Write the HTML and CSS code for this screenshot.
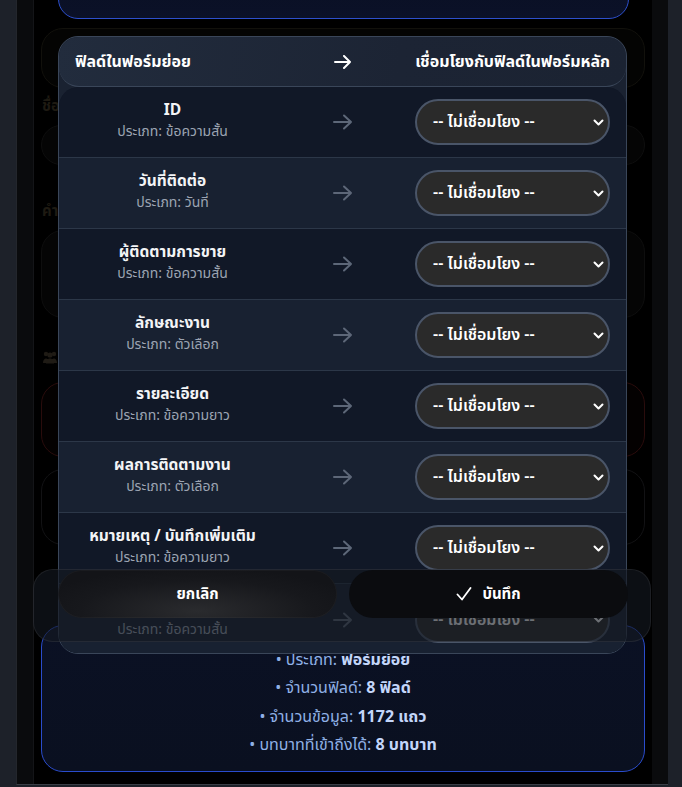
FILE: index.html
```html
<!DOCTYPE html>
<html lang="th">
<head>
<meta charset="utf-8">
<title>Field mapping</title>
<link rel="stylesheet" href="styles.css">
</head>
<body>
<div class="app">
  <div class="panel">
    <div class="content">
      <div class="top-card"></div>
      <div class="faint-card"></div>
      <div class="faint-label">ชื่อฟอร์มย่อย</div>
      <div class="faint-input"></div>
      <div class="faint-label second">คำอธิบาย</div>
      <div class="faint-textarea"></div>
      <div class="faint-label icon-label">
        <svg width="16" height="13" viewBox="0 0 16 13"><circle cx="4" cy="3" r="2.2" fill="currentColor"/><circle cx="12" cy="3" r="2.2" fill="currentColor"/><circle cx="8" cy="4" r="2.6" fill="currentColor"/><path d="M1 12c0-3 1.5-4.5 3-4.5S7 9 7 12zM9 12c0-3 1.5-4.5 3-4.5s3 1.5 3 4.5zM4 12.5c0-3.5 2-5 4-5s4 1.5 4 5z" fill="currentColor"/></svg>
        สิทธิ์การเข้าถึง
      </div>
      <div class="faint-danger"></div>
      <div class="faint-box"></div>
      <div class="info-card">
        <p class="info-line">• ประเภท: <b>ฟอร์มย่อย</b></p>
        <p class="info-line">• จำนวนฟิลด์: <b>8 ฟิลด์</b></p>
        <p class="info-line">• จำนวนข้อมูล: <b>1172 แถว</b></p>
        <p class="info-line">• บทบาทที่เข้าถึงได้: <b>8 บทบาท</b></p>
      </div>
    </div>
  </div>
</div>

<div class="mapping">
  <div class="map-head">
    <span class="head-left">ฟิลด์ในฟอร์มย่อย</span>
    <svg class="head-arrow" width="18" height="14" viewBox="0 0 18 14"><path d="M1 7h15M10 1l6 6-6 6" fill="none" stroke="currentColor" stroke-width="2" stroke-linecap="round" stroke-linejoin="round"/></svg>
    <span class="head-right">เชื่อมโยงกับฟิลด์ในฟอร์มหลัก</span>
  </div>
  <div class="map-body">
    <div class="map-row">
      <div class="field"><div class="f-name">ID</div><div class="f-type">ประเภท: ข้อความสั้น</div></div>
      <svg class="arrow" width="20" height="16" viewBox="0 0 20 16"><path d="M1 8h17M11 1.5l7 6.5-7 6.5" fill="none" stroke="currentColor" stroke-width="2" stroke-linecap="round" stroke-linejoin="round"/></svg>
      <div class="sel"><span>-- ไม่เชื่อมโยง --</span><svg width="11" height="7" viewBox="0 0 11 7"><path d="M1.5 1.5l4 4 4-4" fill="none" stroke="currentColor" stroke-width="2" stroke-linecap="round" stroke-linejoin="round"/></svg></div>
    </div>
    <div class="map-row alt">
      <div class="field"><div class="f-name">วันที่ติดต่อ</div><div class="f-type">ประเภท: วันที่</div></div>
      <svg class="arrow" width="20" height="16" viewBox="0 0 20 16"><path d="M1 8h17M11 1.5l7 6.5-7 6.5" fill="none" stroke="currentColor" stroke-width="2" stroke-linecap="round" stroke-linejoin="round"/></svg>
      <div class="sel"><span>-- ไม่เชื่อมโยง --</span><svg width="11" height="7" viewBox="0 0 11 7"><path d="M1.5 1.5l4 4 4-4" fill="none" stroke="currentColor" stroke-width="2" stroke-linecap="round" stroke-linejoin="round"/></svg></div>
    </div>
    <div class="map-row">
      <div class="field"><div class="f-name">ผู้ติดตามการขาย</div><div class="f-type">ประเภท: ข้อความสั้น</div></div>
      <svg class="arrow" width="20" height="16" viewBox="0 0 20 16"><path d="M1 8h17M11 1.5l7 6.5-7 6.5" fill="none" stroke="currentColor" stroke-width="2" stroke-linecap="round" stroke-linejoin="round"/></svg>
      <div class="sel"><span>-- ไม่เชื่อมโยง --</span><svg width="11" height="7" viewBox="0 0 11 7"><path d="M1.5 1.5l4 4 4-4" fill="none" stroke="currentColor" stroke-width="2" stroke-linecap="round" stroke-linejoin="round"/></svg></div>
    </div>
    <div class="map-row alt">
      <div class="field"><div class="f-name">ลักษณะงาน</div><div class="f-type">ประเภท: ตัวเลือก</div></div>
      <svg class="arrow" width="20" height="16" viewBox="0 0 20 16"><path d="M1 8h17M11 1.5l7 6.5-7 6.5" fill="none" stroke="currentColor" stroke-width="2" stroke-linecap="round" stroke-linejoin="round"/></svg>
      <div class="sel"><span>-- ไม่เชื่อมโยง --</span><svg width="11" height="7" viewBox="0 0 11 7"><path d="M1.5 1.5l4 4 4-4" fill="none" stroke="currentColor" stroke-width="2" stroke-linecap="round" stroke-linejoin="round"/></svg></div>
    </div>
    <div class="map-row">
      <div class="field"><div class="f-name">รายละเอียด</div><div class="f-type">ประเภท: ข้อความยาว</div></div>
      <svg class="arrow" width="20" height="16" viewBox="0 0 20 16"><path d="M1 8h17M11 1.5l7 6.5-7 6.5" fill="none" stroke="currentColor" stroke-width="2" stroke-linecap="round" stroke-linejoin="round"/></svg>
      <div class="sel"><span>-- ไม่เชื่อมโยง --</span><svg width="11" height="7" viewBox="0 0 11 7"><path d="M1.5 1.5l4 4 4-4" fill="none" stroke="currentColor" stroke-width="2" stroke-linecap="round" stroke-linejoin="round"/></svg></div>
    </div>
    <div class="map-row alt">
      <div class="field"><div class="f-name">ผลการติดตามงาน</div><div class="f-type">ประเภท: ตัวเลือก</div></div>
      <svg class="arrow" width="20" height="16" viewBox="0 0 20 16"><path d="M1 8h17M11 1.5l7 6.5-7 6.5" fill="none" stroke="currentColor" stroke-width="2" stroke-linecap="round" stroke-linejoin="round"/></svg>
      <div class="sel"><span>-- ไม่เชื่อมโยง --</span><svg width="11" height="7" viewBox="0 0 11 7"><path d="M1.5 1.5l4 4 4-4" fill="none" stroke="currentColor" stroke-width="2" stroke-linecap="round" stroke-linejoin="round"/></svg></div>
    </div>
    <div class="map-row">
      <div class="field"><div class="f-name">หมายเหตุ / บันทึกเพิ่มเติม</div><div class="f-type">ประเภท: ข้อความยาว</div></div>
      <svg class="arrow" width="20" height="16" viewBox="0 0 20 16"><path d="M1 8h17M11 1.5l7 6.5-7 6.5" fill="none" stroke="currentColor" stroke-width="2" stroke-linecap="round" stroke-linejoin="round"/></svg>
      <div class="sel"><span>-- ไม่เชื่อมโยง --</span><svg width="11" height="7" viewBox="0 0 11 7"><path d="M1.5 1.5l4 4 4-4" fill="none" stroke="currentColor" stroke-width="2" stroke-linecap="round" stroke-linejoin="round"/></svg></div>
    </div>
    <div class="map-row alt last">
      <div class="field"><div class="f-name">เบอร์โทรศัพท์</div><div class="f-type">ประเภท: ข้อความสั้น</div></div>
      <svg class="arrow" width="20" height="16" viewBox="0 0 20 16"><path d="M1 8h17M11 1.5l7 6.5-7 6.5" fill="none" stroke="currentColor" stroke-width="2" stroke-linecap="round" stroke-linejoin="round"/></svg>
      <div class="sel"><span>-- ไม่เชื่อมโยง --</span><svg width="11" height="7" viewBox="0 0 11 7"><path d="M1.5 1.5l4 4 4-4" fill="none" stroke="currentColor" stroke-width="2" stroke-linecap="round" stroke-linejoin="round"/></svg></div>
    </div>
  </div>
</div>

<div class="actions">
  <button class="btn btn-cancel" type="button">ยกเลิก</button>
  <button class="btn btn-save" type="button"><svg width="16" height="14" viewBox="0 0 16 14"><path d="M1.5 7.5l4.5 5L14.5 1" fill="none" stroke="currentColor" stroke-width="1.8" stroke-linecap="round" stroke-linejoin="round"/></svg>บันทึก</button>
</div>
</body>
</html>
```

FILE: styles.css
```css
* { box-sizing: border-box; }

html, body {
  margin: 0;
  height: 787px;
  overflow: hidden;
}

body {
  background: #1d2129;
  font-family: "Noto Sans Thai", "Noto Sans", "DejaVu Sans", sans-serif;
  color: #fff;
  position: relative;
}

.app {
  margin: 0 14px 0 16px;
  height: 785px;
  background: #0a0b0d;
  border-left: 1px solid #23262c;
  border-bottom: 1px solid #3a3e46;
}

.panel {
  margin: 0 16px 0 16px;
  height: 100%;
  background: #000;
  border-left: 1px solid #141518;
}

.content {
  padding: 0 7px 0 7px;
  display: flex;
  flex-direction: column;
}

.top-card {
  margin: -21px 16px 0 17px;
  height: 40px;
  border: 1px solid #2d4fcc;
  border-radius: 20px;
  background: linear-gradient(180deg, #0a1024, #0b1128);
}

.faint-card {
  margin-top: 9px;
  height: 60px;
  border: 1px solid #12110c;
  border-radius: 22px;
  background: #040403;
}

.faint-label {
  margin-top: 9px;
  font-size: 15px;
  font-weight: 700;
  color: #1e1a12;
  line-height: 20px;
  padding-left: 1px;
}

.faint-label.second { margin-top: 37px; }

.faint-label.icon-label {
  margin-top: 29px;
  display: flex;
  align-items: center;
  gap: 6px;
  color: #1f1b15;
}

.faint-input {
  margin-top: 8px;
  height: 40px;
  border: 1px solid #0e0e0e;
  border-radius: 20px;
  background: #050505;
}

.faint-textarea {
  margin-top: 8px;
  height: 88px;
  border: 1px solid #0e0e0e;
  border-radius: 22px;
  background: #050505;
}

.faint-danger {
  margin-top: 15px;
  height: 75px;
  border: 1px solid #2a0c0c;
  border-radius: 22px;
  background: #040101;
}

.faint-box {
  margin-top: 12px;
  height: 76px;
  border: 1px solid #121214;
  border-radius: 22px;
}

.info-card {
  margin-top: 80px;
  height: 147px;
  border: 1px solid #2a4ccc;
  border-radius: 22px;
  background: linear-gradient(180deg, #0b1124, #0a1020);
  padding-top: 20px;
  text-align: center;
}

.info-line {
  margin: 0;
  font-size: 16px;
  line-height: 28.3px;
  color: #8fb0e6;
}

.info-line b {
  color: #c3d6fa;
  font-weight: 700;
}

/* mapping table overlay */
.mapping {
  position: absolute;
  left: 58px;
  top: 36px;
  width: 569px;
  height: 618px;
  border: 1px solid #3a4659;
  border-radius: 20px;
  overflow: hidden;
  background: #1a2231;
}

.map-head {
  height: 50px;
  display: grid;
  grid-template-columns: 1fr auto 1fr;
  align-items: center;
  padding: 0 16px 0 16px;
  background: linear-gradient(100deg, #222c3d 0%, #1c2434 60%, #1b2332 100%);
  border-radius: 20px;
  border-bottom: 1px solid #3a4659;
  font-size: 16px;
  font-weight: 700;
}

.head-left { justify-self: start; }
.head-right { justify-self: end; }

.head-arrow {
  color: #fff;
  justify-self: center;
}

.map-body {
  border-radius: 20px 20px 0 0;
  overflow: hidden;
  background: #111827;
}

.map-row {
  height: 71px;
  display: grid;
  grid-template-columns: 195px 1fr 195px;
  align-items: center;
  padding: 0 16px 0 16px;
  background: #111827;
  border-bottom: 1px solid #2c3748;
}

.map-row.alt { background: #182131; }
.map-row.last { border-bottom: none; }

.field {
  text-align: center;
  padding-bottom: 1px;
}

.f-name {
  font-size: 15.5px;
  font-weight: 700;
  line-height: 20px;
  color: #f3f4f6;
}

.f-type {
  font-size: 14px;
  line-height: 21px;
  color: #9ca4b2;
}

.arrow {
  color: #5d6778;
  justify-self: center;
}

.sel {
  height: 46px;
  border: 2px solid #4a5568;
  border-radius: 23px;
  background: #2a2a2a;
  display: flex;
  align-items: center;
  justify-content: space-between;
  padding: 0 4px 0 16px;
  font-size: 16px;
  font-weight: 600;
  color: #fff;
}

/* sticky actions */
.actions {
  position: absolute;
  left: 33px;
  top: 569px;
  width: 618px;
  height: 73px;
  border: 1px solid rgba(255, 255, 255, 0.07);
  border-radius: 20px;
  background: rgba(20, 24, 32, 0.62);
  display: grid;
  grid-template-columns: 1fr 1fr;
  gap: 12px;
  padding: 0 22px 0 24px;
  align-items: start;
}

.btn {
  height: 48px;
  border-radius: 24px;
  border: none;
  font-family: inherit;
  font-size: 15px;
  font-weight: 700;
  color: #fff;
  display: flex;
  align-items: center;
  justify-content: center;
  gap: 10px;
  cursor: pointer;
}

.btn-cancel {
  background: radial-gradient(ellipse 60% 90% at 50% 85%, #2a2b2e 0%, #17181c 70%, #131418 100%);
  box-shadow: inset 0 0 0 1px rgba(255, 255, 255, 0.03);
}

.btn-save {
  background: #0b0c0f;
}
```
